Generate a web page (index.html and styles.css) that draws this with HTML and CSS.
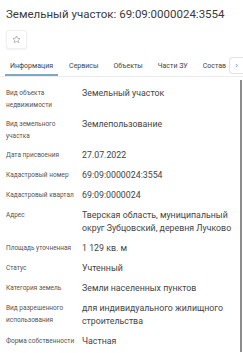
FILE: index.html
```html
<!DOCTYPE html>
<html lang="ru">
<head>
  <meta charset="UTF-8">
  <meta name="viewport" content="width=device-width, initial-scale=1.0">
  <title>Земельный участок: 69:09:0000024:3554</title>
  <link rel="stylesheet" href="styles.css">
</head>
<body>
  <header class="card-head">
    <h1>Земельный участок: 69:09:0000024:3554</h1>
    <button class="fav-btn" title="В избранное">
      <svg width="9" height="9" viewBox="0 0 24 24" fill="none" stroke="#9a9a9a" stroke-width="1.8" stroke-linejoin="round">
        <path d="M12 2.5l2.9 6.1 6.6.8-4.9 4.6 1.3 6.6L12 17.3l-5.9 3.3 1.3-6.6-4.9-4.6 6.6-.8z"/>
      </svg>
    </button>
  </header>

  <nav class="tabs">
    <a class="tab active">Информация</a>
    <a class="tab">Сервисы</a>
    <a class="tab">Объекты</a>
    <a class="tab">Части ЗУ</a>
    <a class="tab">Состав</a>
    <button class="tabs-next">›</button>
  </nav>

  <section class="info">
    <div class="row">
      <div class="label">Вид объекта недвижимости</div>
      <div class="value">Земельный участок</div>
    </div>
    <div class="row">
      <div class="label">Вид земельного участка</div>
      <div class="value">Землепользование</div>
    </div>
    <div class="row">
      <div class="label">Дата присвоения</div>
      <div class="value">27.07.2022</div>
    </div>
    <div class="row">
      <div class="label">Кадастровый номер</div>
      <div class="value">69:09:0000024:3554</div>
    </div>
    <div class="row">
      <div class="label">Кадастровый квартал</div>
      <div class="value">69:09:0000024</div>
    </div>
    <div class="row">
      <div class="label">Адрес</div>
      <div class="value">Тверская область, муниципальный округ Зубцовский, деревня Лучково</div>
    </div>
    <div class="row">
      <div class="label">Площадь уточненная</div>
      <div class="value">1 129 кв. м</div>
    </div>
    <div class="row">
      <div class="label">Статус</div>
      <div class="value">Учтенный</div>
    </div>
    <div class="row">
      <div class="label">Категория земель</div>
      <div class="value">Земли населенных пунктов</div>
    </div>
    <div class="row">
      <div class="label">Вид разрешенного использования</div>
      <div class="value">для индивидуального жилищного строительства</div>
    </div>
    <div class="row">
      <div class="label">Форма собственности</div>
      <div class="value">Частная</div>
    </div>
  </section>
</body>
</html>
```

FILE: styles.css
```css
body {
  font-family: 'Roboto', 'Noto Sans', sans-serif;
  background: #fff;
  margin: 0;
  padding: 0;
  color: #444;
  overflow: hidden;
}
.card-head {
  padding: 7px 6px 0;
}
.card-head h1 {
  font-size: 11.5px;
  font-weight: 400;
  color: #3a3a3a;
  margin: 0;
  line-height: 14px;
}
.fav-btn {
  display: flex;
  align-items: center;
  justify-content: center;
  width: 21px;
  height: 19px;
  margin-top: 9px;
  padding: 0;
  border: 1px solid #f0f0f0;
  border-radius: 3px;
  background: #fff;
  box-shadow: 0 1px 2px rgba(0,0,0,0.06);
}
.tabs {
  display: flex;
  align-items: center;
  margin-top: 7px;
  padding-left: 5px;
  height: 20px;
  border-bottom: 1px solid #ececec;
  position: relative;
  white-space: nowrap;
}
.tab {
  font-size: 7px;
  color: #444;
  padding: 0 5px;
  margin-right: 5px;
  height: 20px;
  line-height: 20px;
}
.tab.active {
  border-bottom: 2px solid #7ea8c6;
  box-sizing: border-box;
  margin-right: 6px;
}
.tabs-next {
  position: absolute;
  right: 0;
  top: 1px;
  width: 14px;
  height: 17px;
  padding: 0;
  border: 1px solid #e3e3e3;
  border-right: none;
  border-radius: 4px 0 0 4px;
  background: #fff;
  color: #4a90e2;
  font-size: 8px;
  line-height: 15px;
}
.info {
  position: relative;
  padding: 7px 6px 0;
}
.info::after {
  content: '';
  position: absolute;
  right: 1px;
  top: 3px;
  width: 2px;
  height: 400px;
  background: #8d8d8d;
}
.row {
  display: grid;
  grid-template-columns: 76px 1fr;
  padding: 3px 0 4px;
}
.label {
  font-size: 6.5px;
  line-height: 12px;
  color: #555;
  padding-right: 6px;
}
.value {
  font-size: 8.8px;
  line-height: 13px;
  color: #444;
}
```
